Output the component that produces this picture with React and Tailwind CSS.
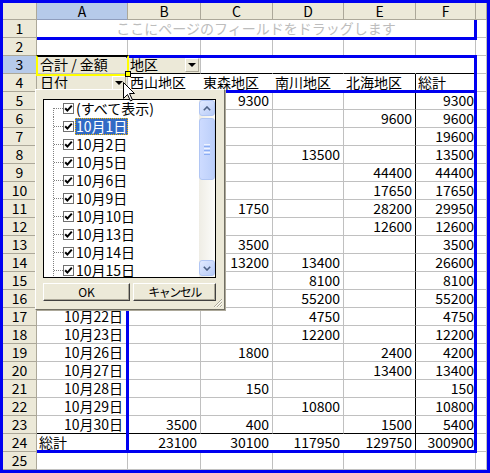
import React from 'react';

const COLS = ['A', 'B', 'C', 'D', 'E', 'F', 'G'];

const dates = {
  5: '10月1日', 6: '10月2日', 7: '10月5日', 8: '10月6日', 9: '10月9日', 10: '10月10日',
  11: '10月13日', 12: '10月14日', 13: '10月15日', 14: '10月16日', 15: '10月19日', 16: '10月20日',
  17: '10月22日', 18: '10月23日', 19: '10月26日', 20: '10月27日', 21: '10月28日', 22: '10月29日',
  23: '10月30日',
};

const values = {
  5: { C: '9300', F: '9300' },
  6: { E: '9600', F: '9600' },
  7: { B: '19600', F: '19600' },
  8: { D: '13500', F: '13500' },
  9: { E: '44400', F: '44400' },
  10: { E: '17650', F: '17650' },
  11: { C: '1750', E: '28200', F: '29950' },
  12: { E: '12600', F: '12600' },
  13: { C: '3500', F: '3500' },
  14: { C: '13200', D: '13400', F: '26600' },
  15: { D: '8100', F: '8100' },
  16: { D: '55200', F: '55200' },
  17: { D: '4750', F: '4750' },
  18: { D: '12200', F: '12200' },
  19: { C: '1800', E: '2400', F: '4200' },
  20: { E: '13400', F: '13400' },
  21: { C: '150', F: '150' },
  22: { D: '10800', F: '10800' },
  23: { B: '3500', C: '400', E: '1500', F: '5400' },
  24: { B: '23100', C: '30100', D: '117950', E: '129750', F: '300900' },
};

const regions = { B: '西山地区', C: '東森地区', D: '南川地区', E: '北海地区', F: '総計' };

const items = ['(すべて表示)', '10月1日', '10月2日', '10月5日', '10月6日', '10月9日', '10月10日', '10月13日', '10月14日', '10月15日'];

const RIGHT = { gray: 'border-r-[#c0c0c0]', none: 'border-r-transparent', black: 'border-r-black' };
const BOTTOM = { gray: 'border-b-[#c0c0c0]', black: 'border-b-black' };

const rightOf = (r, c) => {
  if (c === 'G') return 'gray';
  if (c === 'E' && r >= 4 && r <= 24) return 'black';
  if (r === 3 && ['C', 'D', 'E'].includes(c)) return 'none';
  if (r === 4 && ['B', 'C', 'D'].includes(c)) return 'none';
  if (r === 24 && ['A', 'B', 'C', 'D'].includes(c)) return 'none';
  return 'gray';
};

const bottomOf = (r, c) => {
  if (r === 3 && c !== 'A' && c !== 'G') return 'black';
  if (r === 23 && c !== 'G') return 'black';
  return 'gray';
};

const DropArrow = () => (
  <span className="mr-px flex h-[14px] w-[14px] shrink-0 items-center justify-center border border-t-white border-l-white border-r-[#aca899] border-b-[#aca899] bg-[#ece9d8]">
    <span className="h-0 w-0 border-x-[4px] border-t-[4px] border-x-transparent border-t-black" />
  </span>
);

const Cell = ({ r, c }) => {
  const base = `h-[18px] overflow-hidden whitespace-nowrap border-r border-b text-[14px] leading-[17px] ${RIGHT[rightOf(r, c)]} ${BOTTOM[bottomOf(r, c)]}`;

  if (r === 3 && c === 'A') {
    return <div className={`${base} bg-[#ece9d8] pl-[3px]`}>合計 / 金額</div>;
  }
  if (r === 3 && c === 'B') {
    return (
      <div className={`${base} flex items-center justify-between bg-[#ece9d8] pl-[2px]`}>
        <span>地区</span>
        <DropArrow />
      </div>
    );
  }
  if (r === 4 && c === 'A') {
    return (
      <div className={`${base} flex items-center justify-between bg-[#ece9d8] pl-[3px]`}>
        <span>日付</span>
        <DropArrow />
      </div>
    );
  }
  if (r === 4 && regions[c]) {
    return <div className={`${base} pl-[2px]`}>{regions[c]}</div>;
  }
  if (c === 'A' && dates[r]) {
    return <div className={`${base} pr-[4px] text-right`}>{dates[r]}</div>;
  }
  if (c === 'A' && r === 24) {
    return <div className={`${base} pl-[2px]`}>総計</div>;
  }
  const v = values[r] && values[r][c];
  if (v) {
    return <div className={`${base} text-right ${c === 'F' ? 'pr-px' : 'pr-[3px]'}`}>{v}</div>;
  }
  return <div className={base} />;
};

const TreeLine = ({ first }) => (
  <svg width="19" height="18" className="shrink-0">
    <line x1="9.5" y1={first ? 9 : 0} x2="9.5" y2="18" stroke="#808080" strokeDasharray="1 1" />
    <line x1="10" y1="9.5" x2="19" y2="9.5" stroke="#808080" strokeDasharray="1 1" />
  </svg>
);

const Check = () => (
  <svg width="11" height="11" viewBox="0 0 11 11" className="shrink-0">
    <rect x="0.5" y="0.5" width="10" height="10" fill="#ffffff" stroke="#707070" />
    <path d="M2.2 5.2 L4.4 7.6 L8.8 2.6" fill="none" stroke="#000000" strokeWidth="2" />
  </svg>
);

const ScrollButton = ({ up }) => (
  <div className="flex h-[16px] w-[16px] items-center justify-center rounded-[3px] border border-[#b1c6f4] bg-linear-to-br from-[#e2eaff] to-[#b7cbf7]">
    <svg width="8" height="5" viewBox="0 0 8 5">
      <path d={up ? 'M0.8 4.2 L4 1 L7.2 4.2' : 'M0.8 0.8 L4 4 L7.2 0.8'} fill="none" stroke="#4d6185" strokeWidth="1.6" />
    </svg>
  </div>
);

const FilterPopup = () => (
  <div className="absolute left-[32px] top-[86px] h-[221px] w-[190px] border border-t-white border-l-white border-r-[#716f64] border-b-[#716f64] bg-[#ece9d8] shadow-[1px_1px_0_#aca899]">
    <div className="ml-[7px] mt-[9px] flex h-[179px] w-[173px] border border-black bg-white">
      <div className="-mt-px flex-1 overflow-hidden">
        {items.map((t, i) => (
          <div key={t} className="flex h-[18px] items-center">
            <TreeLine first={i === 0} />
            <Check />
            <span
              className={
                i === 1
                  ? 'ml-px h-[17px] bg-[#316ac5] px-px text-[14px] leading-[17px] text-white outline-1 -outline-offset-1 outline-dotted outline-[#f0b400]'
                  : 'ml-px h-[17px] px-px text-[14px] leading-[17px]'
              }
            >
              {t}
            </span>
          </div>
        ))}
      </div>
      <div className="flex w-[16px] flex-col bg-linear-to-r from-[#efede5] to-[#fcfcfa] pb-px">
        <ScrollButton up />
        <div className="mt-[2px] flex h-[62px] flex-col items-center justify-center gap-px rounded-[3px] border border-[#b1c6f4] bg-linear-to-r from-[#cddbff] to-[#bccffa]">
          <span className="h-px w-[6px] bg-[#eef3ff]" />
          <span className="h-px w-[6px] bg-[#8caef4]" />
          <span className="h-px w-[6px] bg-[#eef3ff]" />
          <span className="h-px w-[6px] bg-[#8caef4]" />
          <span className="h-px w-[6px] bg-[#eef3ff]" />
          <span className="h-px w-[6px] bg-[#8caef4]" />
        </div>
        <div className="flex-1" />
        <ScrollButton />
      </div>
    </div>
    <div className="ml-[7px] mt-[5px] flex gap-[3px]">
      <button className="flex h-[18px] w-[87px] items-center justify-center border border-t-white border-l-white border-r-[#404040] border-b-[#404040] bg-[#ece9d8] text-[12px] leading-[14px] shadow-[inset_-1px_-1px_0_#aca899]">
        OK
      </button>
      <button className="flex h-[18px] w-[83px] items-center justify-center border border-t-white border-l-white border-r-[#404040] border-b-[#404040] bg-[#ece9d8] text-[12px] leading-[14px] tracking-[-1.5px] shadow-[inset_-1px_-1px_0_#aca899]">
        キャンセル
      </button>
    </div>
    <svg width="11" height="11" viewBox="0 0 11 11" className="absolute bottom-px right-px">
      <path d="M10 2 L2 10 M10 5 L5 10 M10 8 L8 10" stroke="#aca899" strokeWidth="1" />
      <path d="M10.5 2.5 L2.5 10.5 M10.5 5.5 L5.5 10.5 M10.5 8.5 L8.5 10.5" stroke="#ffffff" strokeWidth="0.8" />
    </svg>
  </div>
);

export default function App() {
  const rows = Array.from({ length: 25 }, (_, i) => i + 1);

  return (
    <div className="h-[473px] w-[490px] overflow-hidden border-[3px] border-[#0000f0] bg-white font-['Noto_Sans_CJK_JP',sans-serif] text-black">
      <div className="relative">
        <div className="grid grid-cols-[34px_91px_73px_72px_71px_72px_60px_11px] grid-rows-[17px_repeat(25,18px)]">
          <div className="border-r border-b border-r-[#aca899] border-b-[#aca899] bg-[#ece9d8]" />
          {COLS.map((c) => (
            <div
              key={c}
              className={
                c === 'A'
                  ? 'border-r border-b border-r-[#aca899] border-b-[#8f9dbd] bg-[#b6caea] text-center text-[14px] leading-[16px]'
                  : 'border-r border-b border-r-[#aca899] border-b-[#aca899] bg-[#ece9d8] text-center text-[14px] leading-[16px]'
              }
            >
              {c === 'G' ? '' : c}
            </div>
          ))}

          {rows.map((r) => (
            <React.Fragment key={r}>
              <div
                className={
                  r === 3
                    ? 'border-r border-b border-r-[#8f9dbd] border-b-[#aca899] bg-[#b6caea] text-center text-[14px] leading-[17px]'
                    : 'border-r border-b border-r-[#aca899] border-b-[#aca899] bg-[#ece9d8] text-center text-[14px] leading-[17px]'
                }
              >
                {r}
              </div>
              {r === 1 ? (
                <>
                  <div className="col-span-6 overflow-hidden whitespace-nowrap border-r border-b border-r-[#c0c0c0] border-b-[#c0c0c0] text-center text-[14px] leading-[17px] text-[#bdbdbd]">
                    ここにページのフィールドをドラッグします
                  </div>
                  <div className="border-r border-b border-r-[#c0c0c0] border-b-[#c0c0c0]" />
                </>
              ) : (
                COLS.map((c) => <Cell key={c} r={r} c={c} />)
              )}
            </React.Fragment>
          ))}
        </div>

        {/* pivot drop-zone outlines */}
        <div className="absolute left-[34px] top-[34px] h-[3px] w-[440px] bg-[#0000f0]" />
        <div className="absolute left-[471px] top-[17px] h-[20px] w-[3px] bg-[#0000f0]" />
        <div className="absolute left-[123px] top-[52px] h-[3px] w-[351px] bg-[#0000f0]" />
        <div className="absolute left-[471px] top-[52px] h-[398px] w-[3px] bg-[#0000f0]" />
        <div className="absolute left-[34px] top-[447px] h-[3px] w-[440px] bg-[#0000f0]" />
        <div className="absolute left-[123px] top-[87px] h-[363px] w-[3px] bg-[#0000f0]" />
        <div className="absolute left-[123px] top-[87px] h-[3px] w-[351px] bg-[#0000f0]" />

        {/* active cell A3 */}
        <div className="absolute left-[33px] top-[52px] h-[21px] w-[93px] border-2 border-[#ffff00] border-t-black" />
        <div className="absolute left-[122px] top-[68px] h-[6px] w-[6px] border border-black bg-[#ffff00]" />

        <FilterPopup />

        <svg width="13" height="20" viewBox="0 0 13 20" className="absolute left-[120px] top-[79px]">
          <path d="M0.5 0.5 L0.5 16.5 L4.5 12.5 L7.5 19 L9.5 18 L6.5 11.5 L11.5 11.5 Z" fill="#ffffff" stroke="#000000" />
        </svg>
      </div>
    </div>
  );
}
